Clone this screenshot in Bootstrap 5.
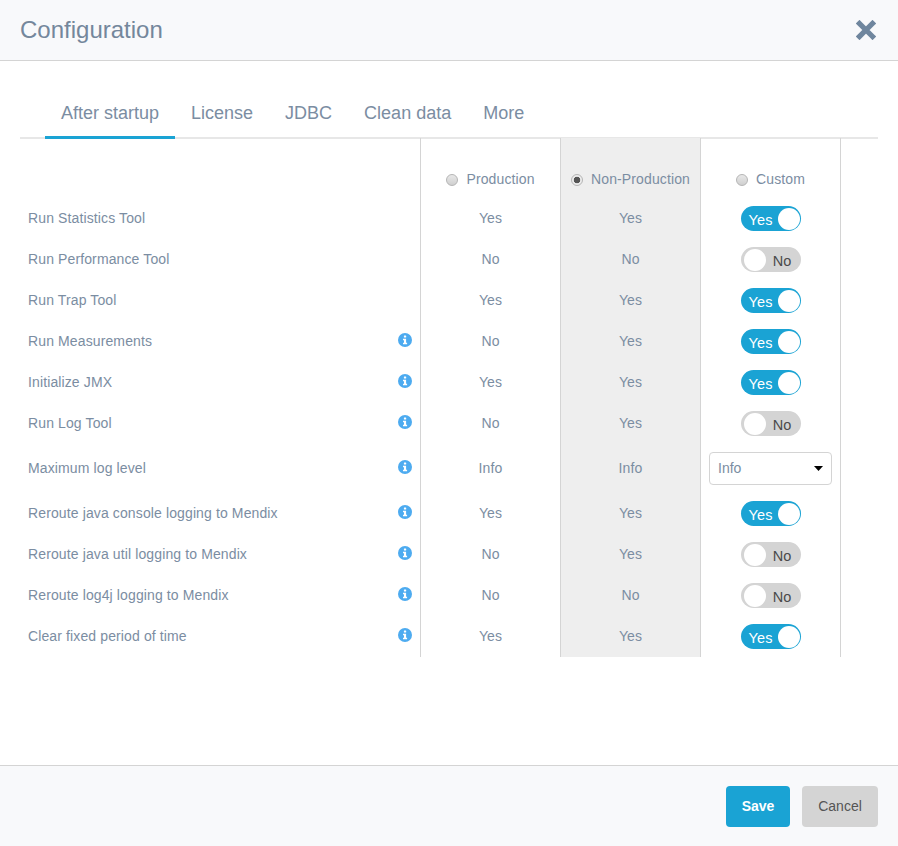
<!DOCTYPE html>
<html lang="en">
<head>
  <meta charset="UTF-8" />
  <meta name="viewport" content="width=device-width, initial-scale=1.0" />
  <title>Configuration</title>
  <link rel="stylesheet" href="https://cdn.jsdelivr.net/npm/bootstrap@5.3.0/dist/css/bootstrap.min.css">
  <style>
    body {
      background: #fff;
      color: #7b8da2;
      font-family: "Liberation Sans", Arial, sans-serif;
      font-size: 14px;
    }
    .cfg-dialog {
      border: 0;
      border-radius: 0;
      color: #7b8da2;
    }
    .cfg-head {
      height: 61px;
      padding: 0 20px;
      background: #f8f9fb;
      border-bottom: 1px solid #d4d4d4;
      border-radius: 0;
    }
    .cfg-head .modal-title {
      font-size: 24px;
      line-height: 60px;
      color: #74879c;
    }
    .cfg-close {
      margin-right: 2px;
      line-height: 0;
    }
    .cfg-body {
      padding: 27px 20px 0;
    }
    .cfg-tabs {
      padding-left: 25px;
      border-bottom: 2px solid #e7e7e7;
    }
    .cfg-tabs .nav-link {
      padding: 12px 16px 10px;
      font-size: 18px;
      line-height: 27px;
      color: #7b8da2;
      border-bottom: 3px solid transparent;
      margin-bottom: -2px;
      height: 51px;
    }
    .cfg-tabs .nav-link.active {
      border-bottom-color: #1aa3d4;
    }
    .cfg-table {
      table-layout: fixed;
      width: 821px;
      border-collapse: separate;
      border-spacing: 0;
      margin-top: -1px;
      letter-spacing: .12px;
    }
    .cfg-table th, .cfg-table td {
      padding: 0;
      font-weight: 400;
      text-align: center;
      height: 41px;
      vertical-align: middle;
    }
    .cfg-table .cell-label {
      width: 400px;
      padding-left: 8px;
      text-align: left;
    }
    .cfg-table .cell-val { width: 140px; border-left: 1px solid #d4d4d4; }
    .cfg-table .cell-last { width: 141px; border-left: 1px solid #d4d4d4; border-right: 1px solid #d4d4d4; }
    .cfg-table .cell-grey { background: #eee; }
    .cfg-table thead th { height: 60px; padding-top: 25px; }
    .cfg-table .row-tall td { height: 49px; }
    .label-wrap { padding-right: 8px; }
    .info-ico { display: block; margin-top: -4px; }
    .radio-opt {
      display: inline-flex;
      align-items: center;
      gap: 8px;
    }
    .radio-dot {
      width: 12px;
      height: 12px;
      border-radius: 50%;
      border: 1px solid #b5b5b5;
      background: linear-gradient(#e8e8e8, #cfcfcf);
    }
    .radio-dot.on {
      background: radial-gradient(circle, #555 0 3px, #ececec 3.6px);
    }
    .cfg-toggle {
      display: inline-flex;
      align-items: center;
      width: 60px;
      height: 25px;
      padding: 0 1px;
      border-radius: 13px;
      vertical-align: middle;
    }
    .cfg-toggle.on { background: #1aa3d4; color: #fff; justify-content: space-between; padding-left: 8px; }
    .cfg-toggle.off { background: #d4d4d4; color: #4a4a4a; justify-content: space-between; padding-right: 9px; padding-left: 3px; }
    .cfg-toggle .knob {
      width: 22px;
      height: 22px;
      border-radius: 50%;
      background: #fff;
    }
    .cfg-toggle .txt { position: relative; top: 2px; font-size: 14.5px; }
    .cfg-select {
      width: 123px;
      height: 33px;
      margin: 0 auto;
      padding: 0 8px;
      font-size: 14px;
      color: #7b8da2;
      border: 1px solid #d4d4d4;
      border-radius: 4px;
      background-image: url("data:image/svg+xml,%3Csvg xmlns='http://www.w3.org/2000/svg' width='9' height='5'%3E%3Cpath d='M0 0h9L4.5 5z' fill='%23000'/%3E%3C/svg%3E");
      background-size: 9px 5px;
      background-position: right 8px center;
    }
    .cfg-foot {
      height: 81px;
      padding: 0 20px 0 0;
      gap: 12px;
      background: #f8f9fb;
      border-top: 1px solid #d4d4d4;
      border-radius: 0;
    }
    .cfg-foot .btn {
      margin: 0;
      height: 41px;
      padding: 0;
      font-size: 14px;
      border: 0;
      border-radius: 4px;
    }
    .btn-save { width: 64px; background: #1aa3d4; color: #fff; font-weight: 700; }
    .btn-save:hover { background: #1792bf; color: #fff; }
    .btn-cancel { width: 76px; background: #d4d4d4; color: #555; }
    .btn-cancel:hover { background: #c8c8c8; color: #555; }
  </style>
</head>
<body>
  <div class="modal-content cfg-dialog vh-100">
    <div class="modal-header cfg-head d-flex justify-content-between align-items-center">
      <h5 class="modal-title">Configuration</h5>
      <a href="#" class="cfg-close" aria-label="Close">
        <svg width="20" height="20" viewBox="0 0 20 20"><path d="M3 3 17 17M17 3 3 17" stroke="#6f869e" stroke-width="5.6" stroke-linecap="square" fill="none" transform="translate(10 10) scale(.93) translate(-10 -10)"/></svg>
      </a>
    </div>
    <div class="modal-body cfg-body">
      <ul class="nav cfg-tabs">
        <li class="nav-item"><a class="nav-link active" href="#">After startup</a></li>
        <li class="nav-item"><a class="nav-link" href="#">License</a></li>
        <li class="nav-item"><a class="nav-link" href="#">JDBC</a></li>
        <li class="nav-item"><a class="nav-link" href="#">Clean data</a></li>
        <li class="nav-item"><a class="nav-link" href="#">More</a></li>
      </ul>
      <table class="cfg-table">
        <thead>
          <tr>
            <th class="cell-label"></th>
            <th class="cell-val"><span class="radio-opt"><span class="radio-dot"></span>Production</span></th>
            <th class="cell-val cell-grey"><span class="radio-opt"><span class="radio-dot on"></span>Non-Production</span></th>
            <th class="cell-last"><span class="radio-opt"><span class="radio-dot"></span>Custom</span></th>
          </tr>
        </thead>
        <tbody id="cfg-rows"></tbody>
      </table>
    </div>
    <div class="modal-footer cfg-foot">
      <button class="btn btn-save">Save</button>
      <button class="btn btn-cancel">Cancel</button>
    </div>
  </div>

  <script src="https://cdn.jsdelivr.net/npm/bootstrap@5.3.0/dist/js/bootstrap.bundle.min.js"></script>
  <script>
    const rows = [
      ['Run Statistics Tool', false, 'Yes', 'Yes', 'Yes'],
      ['Run Performance Tool', false, 'No', 'No', 'No'],
      ['Run Trap Tool', false, 'Yes', 'Yes', 'Yes'],
      ['Run Measurements', true, 'No', 'Yes', 'Yes'],
      ['Initialize JMX', true, 'Yes', 'Yes', 'Yes'],
      ['Run Log Tool', true, 'No', 'Yes', 'No'],
      ['Maximum log level', true, 'Info', 'Info', 'select'],
      ['Reroute java console logging to Mendix', true, 'Yes', 'Yes', 'Yes'],
      ['Reroute java util logging to Mendix', true, 'No', 'Yes', 'No'],
      ['Reroute log4j logging to Mendix', true, 'No', 'No', 'No'],
      ['Clear fixed period of time', true, 'Yes', 'Yes', 'Yes']
    ];

    const infoIcon = `<svg class="info-ico" width="14" height="14" viewBox="0 0 14 14"><circle cx="7" cy="7" r="7" fill="#4dabf0"/><rect x="5.9" y="2.4" width="2.3" height="2.2" rx=".5" fill="#fff"/><path d="M5 5.8h3.1v3.9h1v1.5H5V9.7h1V7.3H5z" fill="#fff"/></svg>`;

    function toggleHtml(val) {
      if (val === 'Yes') {
        return `<span class="cfg-toggle on"><span class="txt">Yes</span><span class="knob"></span></span>`;
      }
      return `<span class="cfg-toggle off"><span class="knob"></span><span class="txt">No</span></span>`;
    }

    const body = document.getElementById('cfg-rows');
    rows.forEach(r => {
      const tr = document.createElement('tr');
      if (r[4] === 'select') tr.className = 'row-tall';
      const last = r[4] === 'select'
        ? `<select class="form-select cfg-select"><option>Info</option></select>`
        : toggleHtml(r[4]);
      tr.innerHTML = `
        <td class="cell-label"><div class="label-wrap d-flex justify-content-between align-items-center"><span>${r[0]}</span>${r[1] ? infoIcon : ''}</div></td>
        <td class="cell-val">${r[2]}</td>
        <td class="cell-val cell-grey">${r[3]}</td>
        <td class="cell-last">${last}</td>`;
      body.appendChild(tr);
    });
  </script>
</body>
</html>
